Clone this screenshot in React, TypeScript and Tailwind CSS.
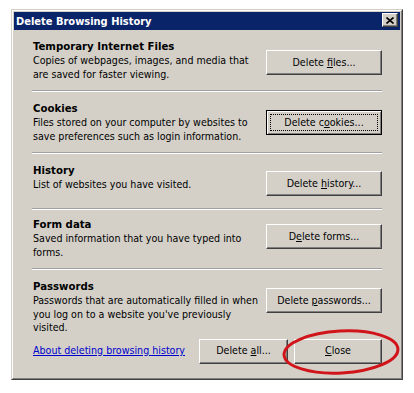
import React from "react";

type Section = {
  title: string;
  lines: string[];
  label: React.ReactNode;
  focused?: boolean;
  btnTop: string;
  pad: string;
};

const sections: Section[] = [
  {
    title: "Temporary Internet Files",
    lines: ["Copies of webpages, images, and media that", "are saved for faster viewing."],
    label: (
      <span>
        Delete <span className="underline">f</span>iles...
      </span>
    ),
    btnTop: "mt-[10px]",
    pad: "pt-[10px]",
  },
  {
    title: "Cookies",
    lines: ["Files stored on your computer by websites to", "save preferences such as login information."],
    label: (
      <span>
        Delete c<span className="underline">o</span>okies...
      </span>
    ),
    focused: true,
    btnTop: "mt-[8px]",
    pad: "pt-[10px]",
  },
  {
    title: "History",
    lines: ["List of websites you have visited."],
    label: (
      <span>
        Delete <span className="underline">h</span>istory...
      </span>
    ),
    btnTop: "mt-[7px]",
    pad: "pt-[10px]",
  },
  {
    title: "Form data",
    lines: ["Saved information that you have typed into", "forms."],
    label: (
      <span>
        D<span className="underline">e</span>lete forms...
      </span>
    ),
    btnTop: "mt-[6px]",
    pad: "pt-[8px]",
  },
  {
    title: "Passwords",
    lines: [
      "Passwords that are automatically filled in when",
      "you log on to a website you've previously",
      "visited.",
    ],
    label: (
      <span>
        Delete <span className="underline">p</span>asswords...
      </span>
    ),
    btnTop: "mt-[8px]",
    pad: "pt-[10px]",
  },
];

const Btn = ({
  children,
  focused,
  width = "w-[116px]",
}: {
  children: React.ReactNode;
  focused?: boolean;
  width?: string;
}) =>
  focused ? (
    <button className={`${width} h-[25px] shrink-0 bg-[#d4d0c8] border border-black shadow-[inset_1px_1px_#ffffff,inset_-1px_-1px_#808080] p-[3px] text-black`}>
      <span className="flex h-full w-full items-center justify-center border border-dotted border-black">
        {children}
      </span>
    </button>
  ) : (
    <button className={`${width} h-[25px] shrink-0 bg-[#d4d0c8] border border-t-white border-l-white border-r-[#404040] border-b-[#404040] shadow-[inset_-1px_-1px_#808080] flex items-center justify-center text-black`}>
      {children}
    </button>
  );

const Divider = () => (
  <div className="mt-[9px] border-t border-t-[#a0a0a0] border-b border-b-white" />
);

export default function App() {
  return (
    <div className="w-[414px] h-[393px] bg-white pt-[9px] pl-[11px] font-['DejaVu_Sans_Condensed','DejaVu_Sans',sans-serif] text-[10.6px] text-black">
      <div className="relative w-[392px] h-[371px] border border-t-[#d4d0c8] border-l-[#d4d0c8] border-r-[#404040] border-b-[#404040]">
        <div className="h-full flex flex-col bg-[#d4d0c8] border border-t-white border-l-white border-r-[#808080] border-b-[#808080] p-px">
          {/* Title bar */}
          <div className="h-[18px] bg-[#0a246a] flex justify-between pl-[2px] pr-[2px]">
            <span className="self-center text-white font-bold text-[11px] leading-none">
              Delete Browsing History
            </span>
            <div className="mt-[1px] w-[16px] h-[14px] bg-[#d4d0c8] border border-t-white border-l-white border-r-[#404040] border-b-[#404040] shadow-[inset_-1px_-1px_#808080] flex items-center justify-center">
              <svg width="8" height="7" viewBox="0 0 8 7">
                <path d="M0.5 0.5 L7.5 6.5 M7.5 0.5 L0.5 6.5" stroke="black" strokeWidth="1.6" />
              </svg>
            </div>
          </div>

          {/* Content */}
          <div className="flex-1 px-[18px]">
            {sections.map((s, i) => (
              <div key={s.title}>
                {i > 0 && <Divider />}
                <div className={`flex justify-between ${s.pad} ${i === 2 ? "pb-[3px]" : ""}`}>
                  <div className="pl-px whitespace-nowrap">
                    <div className="font-bold text-[11.3px] leading-[14px]">{s.title}</div>
                    {s.lines.map((l) => (
                      <div key={l} className="leading-[13.5px]">
                        {l}
                      </div>
                    ))}
                  </div>
                  <div className={s.btnTop}>
                    <Btn focused={s.focused}>{s.label}</Btn>
                  </div>
                </div>
              </div>
            ))}

            {/* Bottom row */}
            <div className="mt-[4px] flex items-center">
              <a href="#" className="pl-px text-[#0000cc] underline flex-1">
                About deleting browsing history
              </a>
              <Btn width="w-[89px]">
                <span>
                  Delete <span className="underline">a</span>ll...
                </span>
              </Btn>
              <div className="ml-[6px]">
                <Btn width="w-[88px]">
                  <span>
                    <span className="underline">C</span>lose
                  </span>
                </Btn>
              </div>
            </div>
          </div>
        </div>

        {/* Red annotation ellipse */}
        <svg className="absolute left-[268px] top-[316px] pointer-events-none" width="134" height="60" viewBox="0 0 134 60">
          <ellipse cx="61" cy="26" rx="57" ry="21" fill="none" stroke="#d0141a" strokeWidth="3" transform="rotate(-3 61 26)" />
        </svg>
      </div>
    </div>
  );
}
